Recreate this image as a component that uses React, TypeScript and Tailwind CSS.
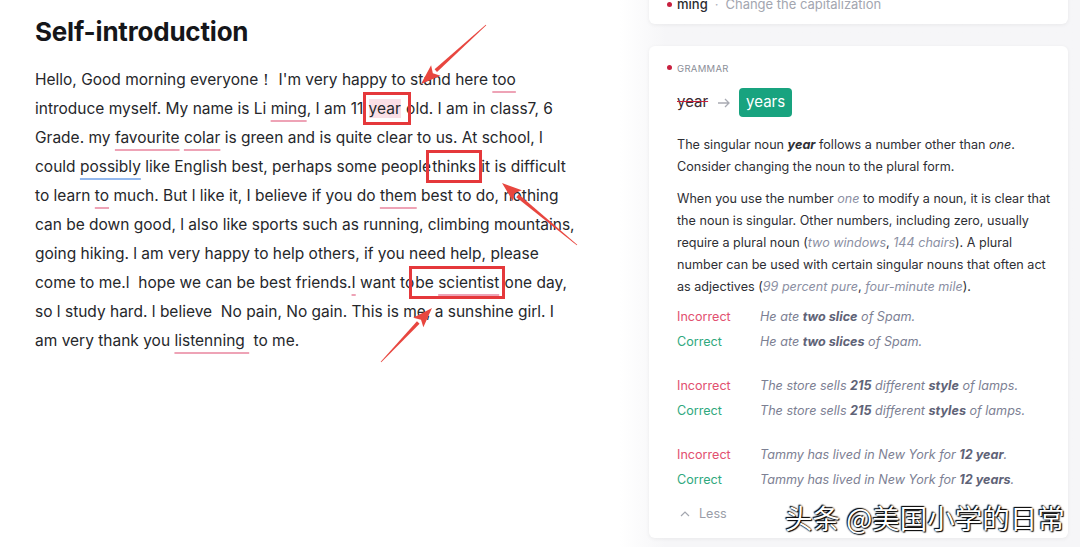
import React from "react";

type Pt = [number, number];

// red annotation arrow, drawn from tail to tip
function Arrow({ tail, tip }: { tail: Pt; tip: Pt }) {
  const dx = tip[0] - tail[0];
  const dy = tip[1] - tail[1];
  const len = Math.hypot(dx, dy);
  const ux = dx / len;
  const uy = dy / len;
  const nx = -uy;
  const ny = ux;
  const headLen = 20;
  const headW = 7;
  const bx = tip[0] - ux * headLen;
  const by = tip[1] - uy * headLen;
  const body = [
    [tail[0] + nx * 0.4, tail[1] + ny * 0.4],
    [bx + nx * 1.8, by + ny * 1.8],
    [bx - nx * 1.8, by - ny * 1.8],
    [tail[0] - nx * 0.4, tail[1] - ny * 0.4],
  ];
  const head = [
    [tip[0], tip[1]],
    [bx + nx * headW, by + ny * headW],
    [bx + ux * 4, by + uy * 4],
    [bx - nx * headW, by - ny * headW],
  ];
  return (
    <g fill="#e8463f">
      <polygon points={body.map((p) => p.join(",")).join(" ")} />
      <polygon points={head.map((p) => p.join(",")).join(" ")} />
    </g>
  );
}

const Pink = ({ children }: { children: React.ReactNode }) => (
  <span className="underline decoration-[#eea3b6] decoration-2 underline-offset-[6px] [text-decoration-skip-ink:none]">
    {children}
  </span>
);

const Blue = ({ children }: { children: React.ReactNode }) => (
  <span className="underline decoration-[#93b8ee] decoration-2 underline-offset-[6px] [text-decoration-skip-ink:none]">
    {children}
  </span>
);

const Box = ({ children }: { children: React.ReactNode }) => (
  <span className="outline-[3px] outline-[#e5383b] outline-offset-[2px] px-[1px] py-[2px]">
    {children}
  </span>
);

const examples = [
  {
    bad: (
      <>
        He ate <b className="text-[#5f6377]">two slice</b> of Spam.
      </>
    ),
    good: (
      <>
        He ate <b className="text-[#5f6377]">two slices</b> of Spam.
      </>
    ),
  },
  {
    bad: (
      <>
        The store sells <b className="text-[#5f6377]">215</b> different{" "}
        <b className="text-[#5f6377]">style</b> of lamps.
      </>
    ),
    good: (
      <>
        The store sells <b className="text-[#5f6377]">215</b> different{" "}
        <b className="text-[#5f6377]">styles</b> of lamps.
      </>
    ),
  },
  {
    bad: (
      <>
        Tammy has lived in New York for <b className="text-[#5f6377]">12 year</b>.
      </>
    ),
    good: (
      <>
        Tammy has lived in New York for <b className="text-[#5f6377]">12 years</b>.
      </>
    ),
  },
];

export default function App() {
  return (
    <div className="relative w-[1080px] h-[547px] overflow-hidden flex bg-white font-['Inter','Noto_Sans',sans-serif] text-[#26272b]">
      {/* Editor */}
      <div className="w-[620px] shrink-0 pl-[35px] pt-[14px]">
        <h1 className="text-[26px] font-bold leading-[36px] tracking-[-0.2px] text-[#15161a]">
          Self-introduction
        </h1>
        <p className="mt-[15px] text-[15.5px] leading-[29px] whitespace-pre">
          Hello, Good morning everyone！ I'm very happy to stand here <Pink>too</Pink>
          <br />
          introduce myself. My name is Li <Pink>ming</Pink>, I am 11{" "}
          <Box>
            <span className="bg-[#fbdfe6]">year</span>{" "}
          </Box>
          old. I am in class7, 6
          <br />
          Grade. my <Pink>favourite</Pink> <Pink>colar</Pink> is green and is quite clear to us. At school, l
          <br />
          could <Blue>possibly</Blue> like English best, perhaps some people
          <Box>thinks</Box> it is difficult
          <br />
          to learn <Pink>to</Pink> much. But l like it, I believe if you do <Pink>them</Pink> best to do, nothing
          <br />
          can be down good, l also like sports such as running, climbing mountains,
          <br />
          going hiking. l am very happy to help others, if you need help, please
          <br />
          come to me.l  hope we can be best friends.<Pink>I</Pink> want to
          <Box>
            be <Pink>scientist</Pink>
          </Box>{" "}
          one day,
          <br />
          so l study hard. l believe  No pain, No gain. This is me, a sunshine girl. I
          <br />
          am very thank you <Pink>listenning </Pink> to me.
        </p>
      </div>

      {/* Suggestions sidebar */}
      <div className="flex-1 flex flex-col gap-[22px] pl-[29px] pr-[12px] bg-linear-to-r from-white to-[#f6f6f8] to-[10%]">
        <div className="-mt-[12px] pt-[6px] pb-[10px] pl-[28px] bg-white rounded-md shadow-[0_1px_4px_rgba(0,0,0,0.06)]">
          <div className="flex items-center text-[13px] leading-[20px] -ml-[10px]">
            <span className="w-[5px] h-[5px] rounded-full bg-[#c8203f] mr-[5px]" />
            <span className="text-[#2a2b30] font-medium">ming</span>
            <span className="mx-[7px] text-[#b0b3bd]">·</span>
            <span className="text-[#a3a6b0]">Change the capitalization</span>
          </div>
        </div>

        <div className="pt-[16px] pb-[14px] pl-[28px] pr-[14px] bg-white rounded-md shadow-[0_1px_4px_rgba(0,0,0,0.06)]">
          <div className="flex items-center -ml-[10px] text-[9.5px] leading-[14px] tracking-[0.3px] text-[#8b8e98]">
            <span className="w-[5px] h-[5px] rounded-full bg-[#c8203f] mr-[5px] -mt-[3px]" />
            GRAMMAR
          </div>
          <div className="mt-[12px] flex items-center text-[15px]">
            <span className="line-through decoration-[#c8203f] text-[#3b2a30]">year</span>
            <svg className="mx-[9px]" width="13" height="10" viewBox="0 0 13 10" fill="none">
              <path d="M1 5h11M8 1l4 4-4 4" stroke="#a9abb3" strokeWidth="1.3" />
            </svg>
            <span className="h-[29px] px-[7px] flex items-center rounded-[4px] bg-[#18a37f] text-white">
              years
            </span>
          </div>
          <p className="mt-[17px] text-[12.6px] leading-[22px] text-[#2e2f35]">
            The singular noun <b className="italic">year</b> follows a number other than <i>one</i>.
            <br />
            Consider changing the noun to the plural form.
          </p>
          <p className="mt-[10px] text-[12.6px] leading-[22px] text-[#2e2f35]">
            When you use the number <i className="text-[#8b8fa3]">one</i> to modify a noun, it is clear that the
            noun is singular. Other numbers, including zero, usually require a plural noun (
            <i className="text-[#8b8fa3]">two windows</i>, <i className="text-[#8b8fa3]">144 chairs</i>). A plural
            number can be used with certain singular nouns that often act as adjectives (
            <i className="text-[#8b8fa3]">99 percent pure</i>, <i className="text-[#8b8fa3]">four-minute mile</i>).
          </p>
          <div className="mt-[6px] flex flex-col gap-[19px] text-[12.6px] leading-[25px]">
            {examples.map((ex, i) => (
              <div key={i}>
                <div className="flex">
                  <span className="w-[83px] shrink-0 text-[#e2506f]">Incorrect</span>
                  <span className="italic text-[#7c8093]">{ex.bad}</span>
                </div>
                <div className="flex">
                  <span className="w-[83px] shrink-0 text-[#2fa97e]">Correct</span>
                  <span className="italic text-[#7c8093]">{ex.good}</span>
                </div>
              </div>
            ))}
          </div>
          <div className="mt-[12px] flex items-center text-[12.6px] leading-[20px] text-[#9a9da8]">
            <svg className="ml-[3px] mr-[9px]" width="10" height="6" viewBox="0 0 10 6" fill="none">
              <path d="M1 5l4-4 4 4" stroke="#a4a7b0" strokeWidth="1.2" />
            </svg>
            Less
          </div>
        </div>
      </div>

      {/* annotations */}
      <svg className="absolute inset-0 pointer-events-none" width="1080" height="547">
        <Arrow tail={[486, 25]} tip={[421, 84]} />
        <Arrow tail={[577, 245]} tip={[502, 183]} />
        <Arrow tail={[381, 362]} tip={[432, 308]} />
      </svg>

      <div className="absolute left-[785px] top-[499px] text-[27.5px] leading-[36px] text-white font-['Noto_Sans_CJK_SC',sans-serif] [text-shadow:0_0_2px_#000,1px_1px_1px_#000,-1px_-1px_1px_#000]">
        头条 @美国小学的日常
      </div>
    </div>
  );
}
